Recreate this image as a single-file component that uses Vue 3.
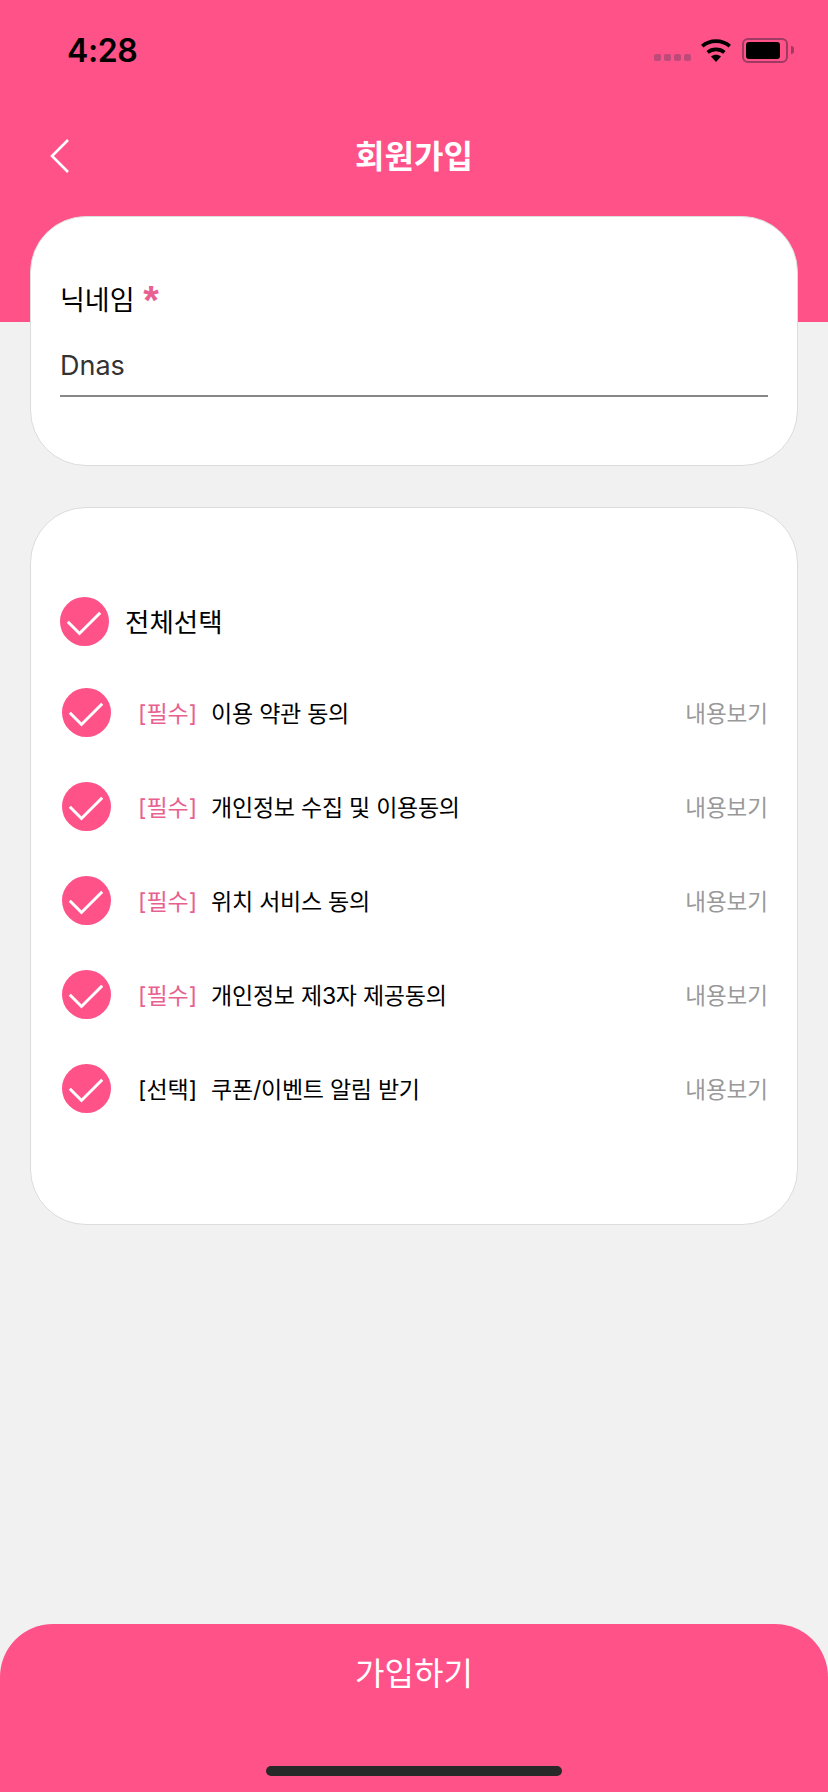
<script setup>
const terms = [
  { tag: '[필수]', text: '이용 약관 동의', required: true },
  { tag: '[필수]', text: '개인정보 수집 및 이용동의', required: true },
  { tag: '[필수]', text: '위치 서비스 동의', required: true },
  { tag: '[필수]', text: '개인정보 제3자 제공동의', required: true },
  { tag: '[선택]', text: '쿠폰/이벤트 알림 받기', required: false },
]
</script>

<template>
  <div class="page">
    <header class="top">
      <div class="status">
        <span class="time">4:28</span>
        <div class="status-icons">
          <div class="signal"><i></i><i></i><i></i><i></i></div>
          <svg class="wifi" width="32" height="24" viewBox="0 0 32 24">
            <path d="M16 24l-5-5.6c2.8-2.3 7.2-2.3 10 0z" fill="#000" />
            <path d="M7.6 14.4c4.6-4 12.2-4 16.8 0" fill="none" stroke="#000" stroke-width="3.6" />
            <path d="M2.2 8.2c7.8-6.8 19.8-6.8 27.6 0" fill="none" stroke="#000" stroke-width="3.6" />
          </svg>
          <div class="battery"><div class="battery-fill"></div></div>
          <div class="battery-nub"></div>
        </div>
      </div>
      <div class="nav">
        <svg class="back" width="20" height="34" viewBox="0 0 20 34">
          <path d="M18 1L2 17l16 16" fill="none" stroke="#fff" stroke-width="2.6" />
        </svg>
        <h1 class="title">회원가입</h1>
      </div>
    </header>

    <section class="card nick-card">
      <div class="label">닉네임 <span class="star">*</span></div>
      <div class="input">Dnas</div>
    </section>

    <section class="card terms-card">
      <div class="all-row">
        <svg class="check" viewBox="0 0 49 49">
          <circle cx="24.5" cy="24.5" r="24.5" fill="#ff5289" />
          <path d="M7.8 24.8L19.5 36.5 40.2 15.8" fill="none" stroke="#fff" stroke-width="3" />
        </svg>
        <span class="all-text">전체선택</span>
      </div>
      <div v-for="term in terms" :key="term.text" class="term-row">
        <svg class="check" viewBox="0 0 49 49">
          <circle cx="24.5" cy="24.5" r="24.5" fill="#ff5289" />
          <path d="M7.8 24.8L19.5 36.5 40.2 15.8" fill="none" stroke="#fff" stroke-width="3" />
        </svg>
        <span class="tag" :class="{ required: term.required }">{{ term.tag }}</span>
        <span class="term-text">{{ term.text }}</span>
        <span class="more">내용보기</span>
      </div>
    </section>

    <footer class="bottom">
      <span class="submit">가입하기</span>
      <div class="home-bar"></div>
    </footer>
  </div>
</template>

<style>
html,
body {
  margin: 0;
  background: #f1f1f1;
}
</style>

<style scoped>
.page {
  width: 828px;
  height: 1792px;
  display: flex;
  flex-direction: column;
  background: #f1f1f1;
  font-family: Inter, "Noto Sans CJK KR", sans-serif;
  overflow: hidden;
}

.top {
  height: 322px;
  flex-shrink: 0;
  background: #ff5289;
}

.status {
  height: 100px;
  display: flex;
  align-items: center;
  justify-content: space-between;
  padding: 0 34px 0 67px;
}

.time {
  font-size: 32px;
  font-weight: 600;
  color: #000;
  letter-spacing: -0.4px;
}

.status-icons {
  display: flex;
  align-items: center;
}

.signal {
  display: flex;
  gap: 3px;
  margin-right: 9px;
  margin-top: 14px;
}

.signal i {
  width: 7px;
  height: 7px;
  border-radius: 2px;
  background: #bd4a78;
}

.wifi {
  margin-right: 10px;
}

.battery {
  width: 46px;
  height: 25px;
  box-sizing: border-box;
  border: 2px solid #9e3a63;
  border-radius: 6px;
  padding: 2px;
}

.battery-fill {
  width: 34px;
  height: 17px;
  background: #000;
  border-radius: 3px;
}

.battery-nub {
  width: 3px;
  height: 8px;
  margin-left: 3px;
  background: #9e3a63;
  border-radius: 0 3px 3px 0;
}

.nav {
  position: relative;
  height: 56px;
  margin-top: 26px;
  display: flex;
  align-items: center;
  justify-content: center;
}

.back {
  position: absolute;
  left: 50px;
  top: 13px;
}

.title {
  margin: 0;
  font-size: 32px;
  font-weight: 700;
  color: #fff;
}

.card {
  position: relative;
  margin: 0 30px;
  box-sizing: border-box;
  background: #fff;
  border: 1px solid #dcdcdc;
  border-radius: 56px;
}

.nick-card {
  height: 250px;
  margin-top: -106px;
  padding: 65px 29px 0;
}

.label {
  font-size: 27px;
  line-height: 38px;
  font-weight: 400;
  color: #000;
}

.star {
  display: inline-block;
  margin-left: 1px;
  font-family: "Liberation Sans", sans-serif;
  font-size: 40px;
  line-height: 30px;
  font-weight: 700;
  color: #e8608f;
  vertical-align: -4px;
}

.input {
  margin-top: 24px;
  height: 51px;
  line-height: 44px;
  font-size: 27px;
  color: #333;
  border-bottom: 2px solid #888;
}

.terms-card {
  height: 718px;
  margin-top: 41px;
  padding: 89px 29px 0;
}

.all-row {
  display: flex;
  align-items: center;
  height: 49px;
  margin-bottom: 19px;
}

.all-text {
  margin-left: 16px;
  margin-top: -2px;
  font-size: 26.5px;
  color: #000;
}

.term-row {
  display: flex;
  align-items: center;
  height: 94px;
  padding-left: 2px;
  font-size: 23px;
}

.check {
  width: 49px;
  height: 49px;
  flex-shrink: 0;
}

.tag {
  margin-left: 27px;
  color: #000;
}

.tag.required {
  color: #e8608f;
}

.term-text {
  margin-left: 14px;
  color: #000;
  letter-spacing: -0.25px;
}

.more {
  margin-left: auto;
  font-size: 22.5px;
  color: #999;
}

.bottom {
  position: relative;
  margin-top: auto;
  height: 168px;
  background: #ff5289;
  border-radius: 53px 53px 0 0;
  display: flex;
  justify-content: center;
}

.submit {
  margin-top: 27px;
  font-size: 32px;
  line-height: 46px;
  color: #fff;
}

.home-bar {
  position: absolute;
  left: 266px;
  bottom: 16px;
  width: 296px;
  height: 10px;
  border-radius: 5px;
  background: #282828;
}
</style>
